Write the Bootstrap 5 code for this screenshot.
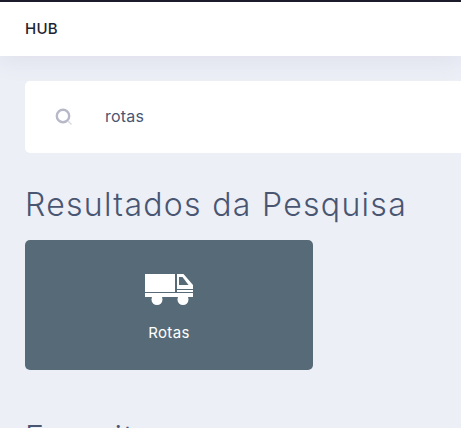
<!DOCTYPE html><html lang="en">
<head>
  <meta charset="UTF-8" />
  <meta name="viewport" content="width=device-width, initial-scale=1.0" />
  <title>HUB</title>
  <link href="https://cdn.jsdelivr.net/npm/bootstrap@5.3.0/dist/css/bootstrap.min.css" rel="stylesheet">
  <style>
    html, body { height: 100%; overflow: hidden; }
    body { background: #edeff7; font-family: "Inter", "Liberation Sans", sans-serif; color: #495672; }
    .hub-bar { height: 56px; background: #fff; border-top: 2px solid #1b1b2b; padding-left: 25px; box-shadow: 0 4px 24px rgba(80, 80, 120, .1); }
    .hub-brand { font-size: 15px; font-weight: 500; color: #1d2330; letter-spacing: .3px; }
    .hub-main { padding: 25px 0 0 25px; }
    .search-box { width: 700px; height: 72px; background: #fff; border-radius: 5px; padding-left: 30px; }
    .search-box svg { width: 18px; height: 18px; margin-right: 32px; }
    .search-text { font-size: 16px; color: #495672; letter-spacing: .2px; padding-bottom: 2px; }
    .section-title { font-size: 32px; font-weight: 300; line-height: 42px; color: #495672; letter-spacing: 1.3px; margin: 31px 0 14px; }
    .route-tile { width: 288px; height: 130px; padding-top: 7px; background: #566b77; border-radius: 5px; color: #fff; font-size: 15px; letter-spacing: .4px; }
    .route-tile svg { width: 48px; height: 33px; margin-bottom: 16px; }
    .fav-title { margin-top: 47px; }
  </style>
</head>
<body>
  <header class="hub-bar d-flex align-items-center">
    <span class="hub-brand">HUB</span>
  </header>

  <main class="hub-main">
    <div class="search-box d-flex align-items-center">
      <svg viewBox="0 0 18 18" fill="none" aria-hidden="true">
        <circle cx="8" cy="8" r="6.2" stroke="#b7b8c8" stroke-width="2.4"/>
        <path d="M13 13l3.5 3.5" stroke="#dcdce6" stroke-width="1.6"/>
      </svg>
      <span class="search-text">rotas</span>
    </div>

    <h2 class="section-title">Resultados da Pesquisa</h2>

    <div class="route-tile d-flex flex-column align-items-center justify-content-center">
      <svg viewBox="0 0 48 33" fill="#fff" aria-hidden="true">
        <path d="M0 1h30v18H0z"/>
        <path fill-rule="evenodd" d="M32 1h6.500L48 12v7H32zM34 4v8h9.500L37.500 4z"/>
        <path d="M32 16h16v1H32z" fill="#566b77"/>
        <path d="M0 20h48v4H0z"/>
        <circle cx="12" cy="26.500" r="5.500"/>
        <circle cx="38" cy="26.500" r="5.500"/>
      </svg>
      <span>Rotas</span>
    </div>

    <h2 class="section-title fav-title">Favoritos</h2>
  </main>
</body>
</html>
